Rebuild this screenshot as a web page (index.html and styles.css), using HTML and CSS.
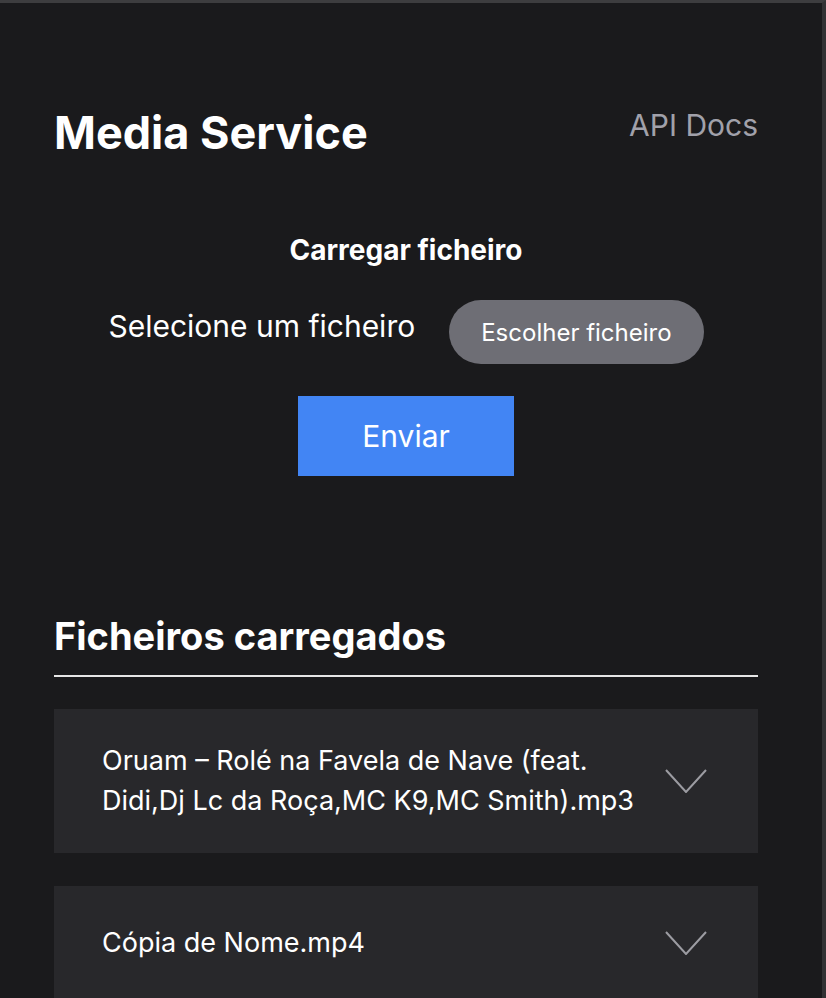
FILE: index.html
```html
<!DOCTYPE html>
<html lang="pt">
<head>
<meta charset="utf-8">
<title>Media Service</title>
<link rel="stylesheet" href="styles.css">
</head>
<body>
<div class="frame">
  <main class="page">
    <header class="topbar">
      <h1 class="brand">Media Service</h1>
      <a class="docs" href="#">API Docs</a>
    </header>

    <section class="upload">
      <h2 class="upload-title">Carregar ficheiro</h2>
      <div class="picker">
        <span class="picker-label">Selecione um ficheiro</span>
        <button class="choose" type="button">Escolher ficheiro</button>
      </div>
      <button class="send" type="button">Enviar</button>
    </section>

    <section class="files">
      <h2 class="files-title">Ficheiros carregados</h2>
      <ul class="file-list">
        <li class="file">
          <span class="file-name">Oruam – Rolé na Favela de Nave (feat. Didi,Dj Lc da Roça,MC K9,MC Smith).mp3</span>
          <span class="chev"><svg width="42" height="24" viewBox="0 0 42 24"><path d="M1 1 L21 23 L41 1" fill="none" stroke="#9c9ca2" stroke-width="2"/></svg></span>
        </li>
        <li class="file">
          <span class="file-name">Cópia de Nome.mp4</span>
          <span class="chev"><svg width="42" height="24" viewBox="0 0 42 24"><path d="M1 1 L21 23 L41 1" fill="none" stroke="#9c9ca2" stroke-width="2"/></svg></span>
        </li>
      </ul>
    </section>
  </main>
</div>
</body>
</html>
```

FILE: styles.css
```css
* { box-sizing: border-box; }
html, body {
  margin: 0;
  padding: 0;
  background: #1a1a1c;
  height: 100%;
  overflow: hidden;
}
body {
  font-family: Inter, "Liberation Sans", sans-serif;
  color: #ffffff;
}
.frame {
  min-height: 100%;
  border-top: 3px solid #3d3d3f;
  border-right: 4px solid #323234;
}
.page {
  width: 704px;
  margin-left: 54px;
  padding-top: 102px;
}
.topbar {
  display: flex;
  justify-content: space-between;
  align-items: flex-start;
}
.brand {
  margin: 0;
  font-size: 45px;
  font-weight: 700;
  line-height: 56px;
}
.docs {
  color: #a1a1aa;
  text-decoration: none;
  font-size: 30px;
  line-height: 34px;
  margin-top: 3px;
}
.upload {
  display: flex;
  flex-direction: column;
  align-items: center;
  margin-top: 72px;
}
.upload-title {
  margin: 0;
  font-size: 28px;
  font-weight: 700;
  line-height: 34px;
}
.picker {
  display: flex;
  align-items: center;
  gap: 34px;
  margin-top: 33px;
}
.picker-label {
  font-size: 30px;
  line-height: 40px;
  margin-top: -12px;
}
.choose {
  font-family: inherit;
  border: 0;
  background: #6e6e75;
  color: #ffffff;
  font-size: 24px;
  height: 64px;
  padding: 0 32px;
  border-radius: 32px;
}
.send {
  font-family: inherit;
  border: 0;
  background: #4285f4;
  color: #ffffff;
  font-size: 30px;
  width: 216px;
  height: 80px;
  margin-top: 32px;
}
.files {
  margin-top: 136px;
}
.files-title {
  margin: 0;
  font-size: 38px;
  font-weight: 700;
  line-height: 48px;
  padding-bottom: 15px;
  border-bottom: 2px solid #e6e6e6;
}
.file-list {
  list-style: none;
  margin: 32px 0 0;
  padding: 0;
  display: flex;
  flex-direction: column;
  gap: 33px;
}
.file {
  background: #28282b;
  display: flex;
  align-items: center;
  justify-content: space-between;
  gap: 24px;
  padding: 32px 51px 32px 48px;
}
.file-name {
  font-size: 27px;
  line-height: 40px;
}
.chev {
  display: flex;
  align-items: center;
  height: 50px;
  flex: none;
}
.chev svg { display: block; }
```
